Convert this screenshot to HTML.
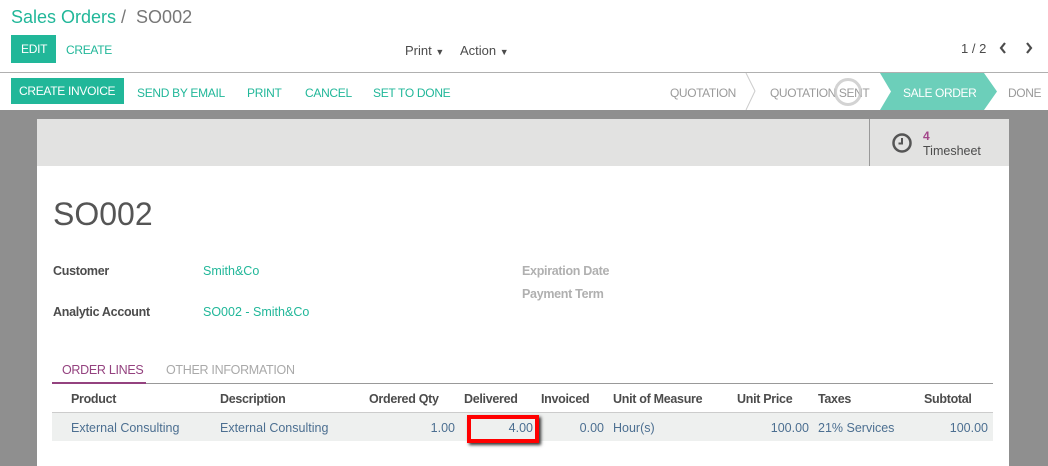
<!DOCTYPE html>
<html><head><style>
*{margin:0;padding:0;box-sizing:border-box}
body{width:1048px;height:466px;overflow:hidden;background:#8f8f8f;font-family:"Liberation Sans",sans-serif;font-size:13px;color:#4c4c4c;position:relative}
.a{position:absolute;white-space:nowrap}
.top{position:absolute;left:0;top:0;width:1048px;height:110px;background:#fff}
.teal{color:#21b799}
.btn{position:absolute;white-space:nowrap;background:#21b799;color:#fff;height:26px;line-height:26px;padding:0 10px;font-size:12px;letter-spacing:-0.3px}
.lnk{color:#21b799;font-size:12px;letter-spacing:-0.3px}
.st{color:#9a9a9a;font-size:12px;letter-spacing:-0.4px}
.card{position:absolute;left:37px;top:119px;width:972px;height:347px;background:#fff}
.hd{position:absolute;left:0;top:0;width:972px;height:47px;background:#e2e2e1}
.lbl{font-weight:bold;font-size:12.5px;color:#4c4c4c;letter-spacing:-0.3px}
.th{font-weight:bold;font-size:12.5px;color:#4c4c4c;letter-spacing:-0.3px}
.td{color:#4c6f91;font-size:12.5px}
</style></head><body>
<div class="top">
<div class="a" style="left:11px;top:7px;font-size:18px;color:#21b799">Sales Orders <span style="color:#777">/ &nbsp;SO002</span></div>
<div class="btn" style="left:11px;top:35px;height:28px;line-height:28px;width:45px">EDIT</div>
<div class="a lnk" style="left:66px;top:43px">CREATE</div>
<div class="a" style="left:405px;top:43px;color:#4c4c4c">Print <span style="font-size:9px">▼</span></div>
<div class="a" style="left:460px;top:43px;color:#4c4c4c">Action <span style="font-size:9px">▼</span></div>
<div class="a" style="left:961px;top:41px;color:#4c4c4c">1 / 2</div>
<svg class="a" style="left:998px;top:41px" width="40" height="14"><path d="M7 2 L3 7 L7 12M29 2 L33 7 L29 12" stroke="#4c4c4c" stroke-width="2.2" fill="none"/></svg>
<div class="a" style="left:0;top:72px;width:1048px;height:1px;background:#b0b0b0"></div>
<div class="btn" style="left:11px;top:78px;width:113px;padding:0 8px">CREATE INVOICE</div>
<div class="a lnk" style="left:137px;top:86px">SEND BY EMAIL</div>
<div class="a lnk" style="left:247px;top:86px">PRINT</div>
<div class="a lnk" style="left:305px;top:86px">CANCEL</div>
<div class="a lnk" style="left:373px;top:86px">SET TO DONE</div>
<div class="a st" style="left:670px;top:86px">QUOTATION</div>
<svg class="a" style="left:745px;top:73px" width="12" height="37"><path d="M1 0 L10 18 L1 37" stroke="#ccc" fill="none"/></svg>
<div class="a st" style="left:770px;top:86px">QUOTATION SENT</div>
<div class="a" style="left:834px;top:78px;width:28px;height:28px;border-radius:50%;border:3px solid rgba(200,200,200,.8)"></div>
<svg class="a" style="left:880px;top:73px" width="120" height="37"><path d="M0 0 L104 0 L117 18.5 L104 37 L0 37 L11 18.5 Z" fill="#6ccfba"/></svg>
<div class="a" style="left:903px;top:86px;color:#fff;font-size:12px;letter-spacing:-0.4px">SALE ORDER</div>
<div class="a st" style="left:1008px;top:86px">DONE</div>
</div>
<div class="card">
<div class="hd">
<div class="a" style="left:832px;top:0;width:1px;height:47px;background:#999"></div>
<svg class="a" style="left:854px;top:13px" width="22" height="22"><circle cx="11" cy="11" r="8.5" stroke="#555" stroke-width="2.5" fill="none"/><path d="M11 6 V11.5 H7.5" stroke="#555" stroke-width="2" fill="none"/></svg>
<div class="a" style="left:886px;top:10px;color:#a24689;font-weight:bold;font-size:12px">4</div>
<div class="a" style="left:886px;top:25px;font-size:12.5px">Timesheet</div>
</div>
<div class="a" style="left:16px;top:77px;font-size:32px;color:#555">SO002</div>
<div class="a lbl" style="left:16px;top:145px">Customer</div>
<div class="a teal" style="left:166px;top:145px;font-size:12.5px">Smith&amp;Co</div>
<div class="a lbl" style="left:16px;top:186px">Analytic Account</div>
<div class="a teal" style="left:166px;top:186px;font-size:12.5px">SO002 - Smith&amp;Co</div>
<div class="a lbl" style="left:485px;top:145px;color:#b0b0b0">Expiration Date</div>
<div class="a lbl" style="left:485px;top:168px;color:#b0b0b0">Payment Term</div>
<div class="a" style="left:25px;top:244px;color:#94427f;font-size:12.5px;letter-spacing:-0.3px">ORDER LINES</div>
<div class="a" style="left:129px;top:244px;color:#a9a9a9;font-size:12.5px;letter-spacing:-0.3px">OTHER INFORMATION</div>
<div class="a" style="left:15px;top:264px;width:941px;height:1px;background:#999"></div>
<div class="a" style="left:15px;top:263px;width:94px;height:2px;background:#94427f"></div>
<div class="a th" style="left:34px;top:273px">Product</div>
<div class="a th" style="left:183px;top:273px">Description</div>
<div class="a th" style="left:332px;top:273px">Ordered Qty</div>
<div class="a th" style="left:427px;top:273px">Delivered</div>
<div class="a th" style="left:504px;top:273px">Invoiced</div>
<div class="a th" style="left:576px;top:273px">Unit of Measure</div>
<div class="a th" style="left:700px;top:273px">Unit Price</div>
<div class="a th" style="left:781px;top:273px">Taxes</div>
<div class="a th" style="left:887px;top:273px">Subtotal</div>
<div class="a" style="left:15px;top:293px;width:941px;height:1px;background:#ccc"></div>
<div class="a" style="left:15px;top:294px;width:941px;height:28px;background:#eef0ef"></div>
<div class="a td" style="left:34px;top:302px">External Consulting</div>
<div class="a td" style="left:183px;top:302px">External Consulting</div>
<div class="a td" style="left:390px;top:302px;width:28px;text-align:right">1.00</div>
<div class="a" style="left:430px;top:296px;width:72px;height:28px;border:4px solid #f00;box-shadow:2px 2px 3px #333"></div>
<div class="a td" style="left:460px;top:302px;width:36px;text-align:right">4.00</div>
<div class="a td" style="left:530px;top:302px;width:37px;text-align:right">0.00</div>
<div class="a td" style="left:576px;top:302px">Hour(s)</div>
<div class="a td" style="left:720px;top:302px;width:52px;text-align:right">100.00</div>
<div class="a td" style="left:781px;top:302px">21% Services</div>
<div class="a td" style="left:896px;top:302px;width:55px;text-align:right">100.00</div>
</div>
</body></html>
